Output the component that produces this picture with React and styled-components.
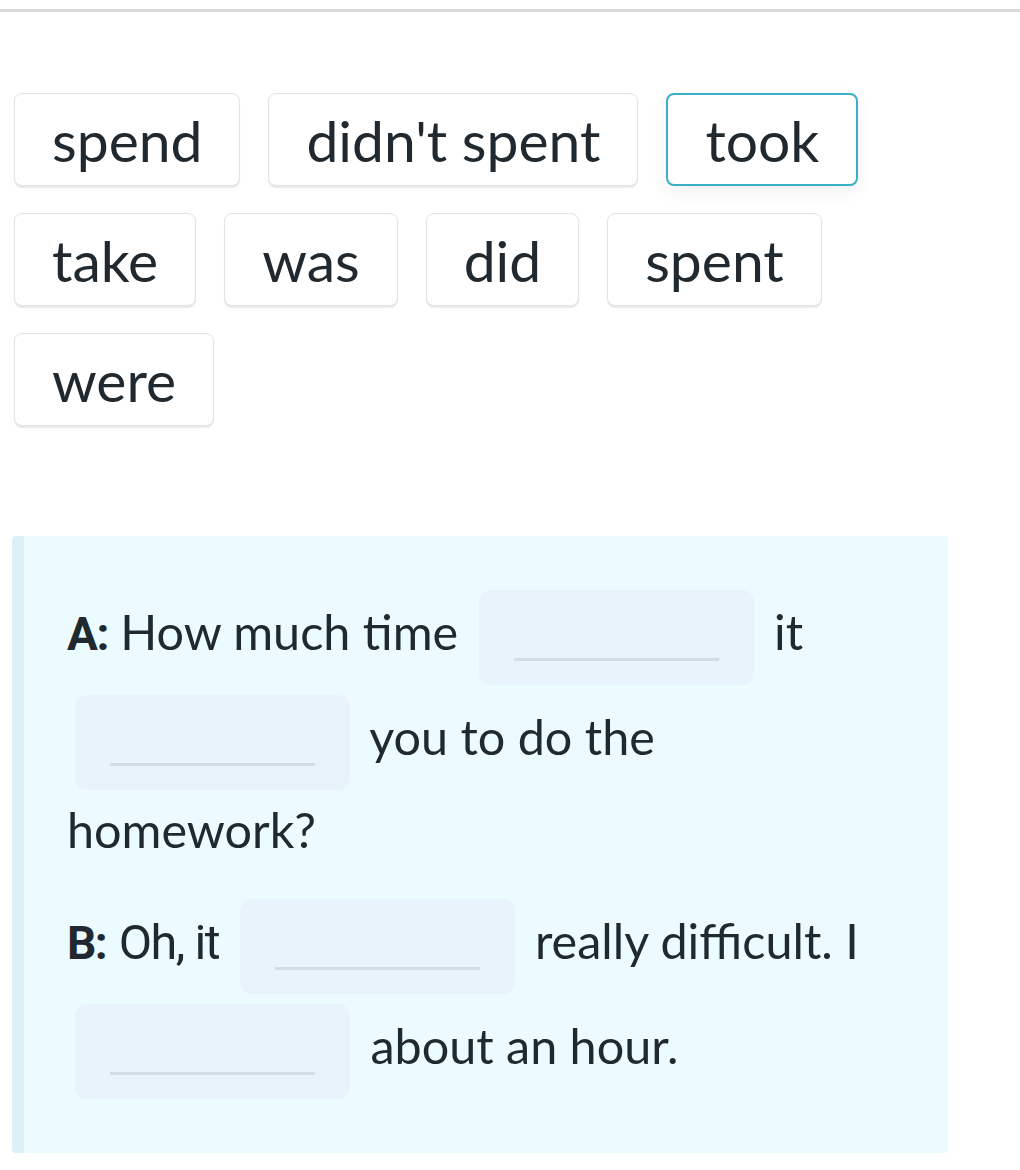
import React from "react";
import styled, { createGlobalStyle } from "styled-components";

const GlobalStyle = createGlobalStyle`
  body {
    margin: 0;
    background: #ffffff;
    font-family: "Lato", "Inter", sans-serif;
    color: #1f292f;
  }
`;

const words = ["spend", "didn't spent", "took", "take", "was", "did", "spent", "were"];

const App = () => {
  return (
    <>
      <GlobalStyle />
      <StyledRule />
      <StyledMain>
        <StyledWordBank>
          {words.map((w) => (
            <StyledChip key={w} $selected={w === "took"}>
              {w}
            </StyledChip>
          ))}
        </StyledWordBank>
        <StyledExercise>
          <StyledLine>
            <StyledSpeaker>A:</StyledSpeaker> How much time <Blank /> it <Blank /> you
            to do the homework?
          </StyledLine>
          <StyledLine>
            <StyledSpeaker>B:</StyledSpeaker> <StyledLead>Oh, it</StyledLead> <Blank /> really
            difficult. I <Blank /> about an hour.
          </StyledLine>
        </StyledExercise>
      </StyledMain>
    </>
  );
};

const Blank = () => (
  <StyledBlank>
    <StyledUnderline />
  </StyledBlank>
);

export default App;

const StyledRule = styled.div`
  margin-top: 9px;
  height: 3px;
  background: #dadada;
`;

const StyledMain = styled.main`
  padding: 81px 12px 20px;
  display: flex;
  flex-direction: column;
  gap: 110px;
`;

const StyledWordBank = styled.div`
  display: flex;
  flex-wrap: wrap;
  gap: 27px 28px;
  padding-left: 2px;
  width: 936px;
`;

const StyledChip = styled.div`
  height: 93px;
  box-sizing: border-box;
  display: flex;
  align-items: center;
  padding: 0 37px;
  padding-top: 1px;
  font-size: 57px;
  background: #ffffff;
  border-radius: 8px;
  border: ${(p) => (p.$selected ? "2px solid #3aafc7" : "1px solid #e3e3e3")};
  box-shadow: ${(p) =>
    p.$selected
      ? "0 6px 18px rgba(0, 0, 0, 0.06)"
      : "0 2px 1px rgba(0, 0, 0, 0.09)"};
`;

const StyledExercise = styled.section`
  width: 936px;
  box-sizing: border-box;
  background: #ebfbfe;
  border-left: 12px solid #dcf1f5;
  border-radius: 4px;
  padding: 49px 50px 49px 43px;
  display: flex;
  flex-direction: column;
  gap: 30px;
`;

const StyledLine = styled.p`
  margin: 0;
  font-size: 48.5px;
  line-height: 69px;
`;

const StyledSpeaker = styled.span`
  font-family: "Roboto", "DejaVu Sans", sans-serif;
  font-weight: 700;
  font-size: 46px;
  letter-spacing: -1.5px;
`;

const StyledLead = styled.span`
  font-family: "Roboto", "DejaVu Sans", sans-serif;
  letter-spacing: -1.5px;
`;

const StyledBlank = styled.span`
  display: inline-block;
  vertical-align: middle;
  box-sizing: border-box;
  width: 275px;
  height: 95px;
  margin: 5px 8px;
  padding: 68px 35px 0;
  background: #e9f3fb;
  border-radius: 12px;
`;

const StyledUnderline = styled.span`
  display: block;
  height: 3px;
  background: #d4dde4;
`;
